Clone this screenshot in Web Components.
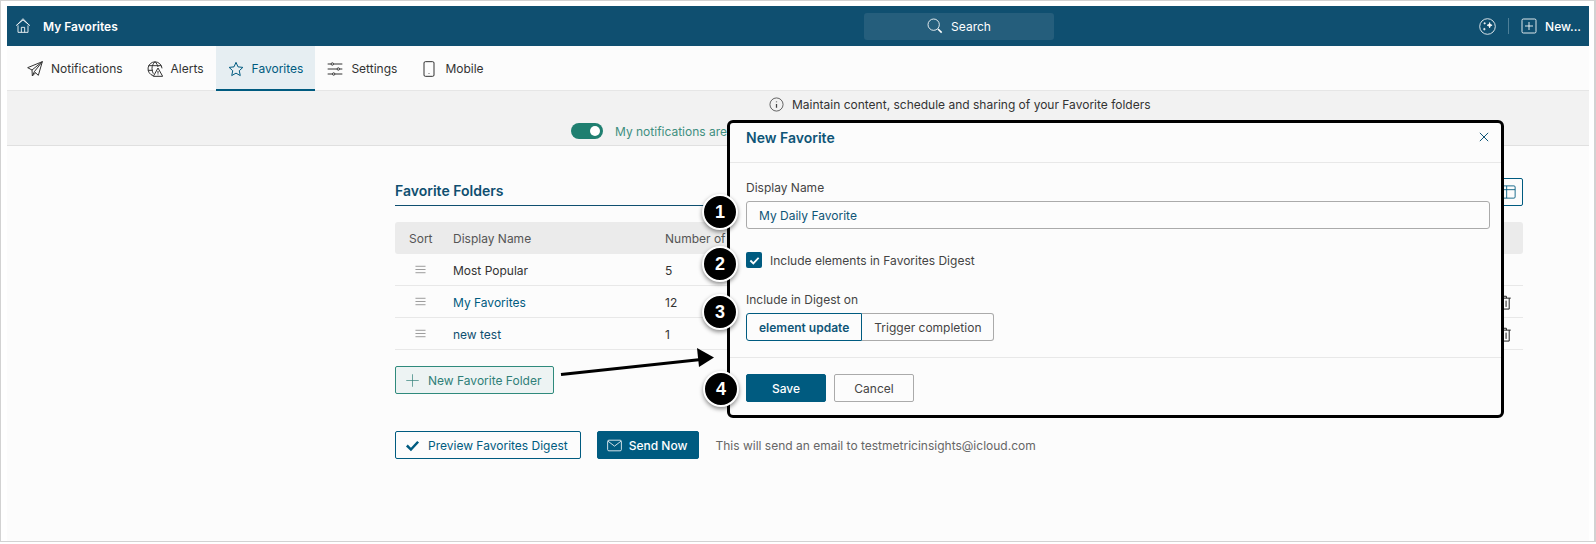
<!DOCTYPE html>
<html lang="en">
<head>
<meta charset="utf-8">
<title>My Favorites</title>
<style>
  html, body { margin: 0; height: 544px; overflow: hidden; background: #fff; }
  body { font: 12px Inter, "Liberation Sans", sans-serif; color: #333; position: relative; }
</style>
</head>
<body>
<app-frame>
  <top-bar title="My Favorites"></top-bar>
  <tab-bar>
    <nav-tab icon="plane" label="Notifications"></nav-tab>
    <nav-tab icon="globe" label="Alerts"></nav-tab>
    <nav-tab icon="star" label="Favorites" active></nav-tab>
    <nav-tab icon="sliders" label="Settings"></nav-tab>
    <nav-tab icon="phone" label="Mobile"></nav-tab>
  </tab-bar>
  <info-band></info-band>
  <folders-panel></folders-panel>
</app-frame>

<pointer-arrow></pointer-arrow>
<new-favorite-modal></new-favorite-modal>
<step-badge n="1" style="--x:720px;--y:212px"></step-badge>
<step-badge n="2" style="--x:720px;--y:264px"></step-badge>
<step-badge n="3" style="--x:720px;--y:312px"></step-badge>
<step-badge n="4" style="--x:721px;--y:389px"></step-badge>

<script>
const ICONS = {
  home: '<path d="M1.5 11.5 12 3l10.5 8.5M4 9.5 12 1l8 8.5"/><path d="M4.5 11v10.5h15V11"/><path d="M9.5 21.5V14h5v7.5"/>',
  plane: '<path d="M23 1 1 10l6.500 3.500L23 1 11 16l6 5.500z"/><path d="M7.500 13.500 8 22.500l3-6.500"/><path d="m8 22.500 4.500-4.500"/>',
  globe: '<path d="M9.500 22A10.500 10.500 0 1 1 22.500 11"/><path d="M12 1C9 4 7.500 7.500 7.500 11c0 3 .6 5.500 2 8M12 1c2.500 2.500 4 5.500 4.500 8"/><path d="M2.300 7h19M1.500 14h7"/><path d="M16.500 10.500 9.500 23h14z"/><path d="M16.500 15v4M16.500 20.300v1"/>',
  star: '<path d="m12 2 3 6.800 7.300.8-5.400 5 1.500 7.300L12 18.200l-6.400 3.700 1.500-7.300-5.400-5 7.300-.8z"/>',
  sliders: '<path d="M1 4.500h5M10 4.500h13M1 12h14M19 12h4M1 19.500h7M12 19.500h11"/><circle cx="8" cy="4.500" r="1.800"/><circle cx="17" cy="12" r="1.800"/><circle cx="10" cy="19.500" r="1.800"/>',
  phone: '<rect x="4.500" y="1" width="15" height="22" rx="2"/><path d="M12 18.500v.8" stroke-width="2.200"/>',
  search: '<circle cx="10" cy="10" r="8.500"/><path d="m16.500 16.500 5.500 5.500" stroke-width="2.400"/>',
  info: '<circle cx="12" cy="12" r="10.500"/><path d="M12 11v6M12 7v1.500" stroke-width="2"/>',
  sparkle: '<circle cx="12" cy="12" r="11"/><path d="M15 6.500c.4 2.500 1.200 3.300 3.500 3.700-2.300.4-3.100 1.200-3.500 3.700-.4-2.500-1.200-3.300-3.500-3.700 2.300-.4 3.100-1.200 3.500-3.700z" fill="currentColor"/><path d="M8 6v3M6.500 7.500h3M7.500 14v3.500M5.800 15.700h3.400"/>',
  plusbox: '<rect x="1.500" y="1.500" width="21" height="21" rx="2"/><path d="M12 6v12M6 12h12"/>',
  plus: '<path d="M12 2v20M2 12h20"/>',
  check: '<path d="m3 12 6.500 6.500L21 6" stroke-width="4"/>',
  mail: '<rect x="1" y="3.500" width="22" height="17" rx="2"/><path d="m1.500 5 10.500 8L22.500 5"/>',
  grid: '<rect x="1.500" y="1.500" width="21" height="21" rx="2"/><path d="M1.500 8h21M8 1.500v21"/>',
  trash: '<path d="M2 5h20M9 5V2h6v3M4.500 5v17.500h15V5M9.500 9v10M14.500 9v10"/>',
  handle: '<path d="M1 5h22M1 12h22M1 19h22"/>',
  close: '<path d="m2 2 20 20M22 2 2 22"/>'
};

function icon(name, size, width = 1.5) {
  return `<svg width="${size}" height="${size}" viewBox="0 0 24 24" fill="none" stroke="currentColor" stroke-width="${width}" aria-hidden="true">${ICONS[name]}</svg>`;
}

class AppFrame extends HTMLElement {
  constructor() {
    super();
    this.attachShadow({ mode: 'open' }).innerHTML = `
      <style>
        :host {
          display: block;
          box-sizing: border-box;
          height: 542px;
          padding: 5px 5px 0 6px;
          border: solid #d2d2d2;
          border-width: 1px 2px 1px 1px;
          background: #fff;
        }
        .app { height: 100%; background: #fcfcfc; display: flex; flex-direction: column; }
      </style>
      <div class="app"><slot></slot></div>`;
  }
}

class TopBar extends HTMLElement {
  constructor() {
    super();
    this.attachShadow({ mode: 'open' }).innerHTML = `
      <style>
        :host {
          display: grid;
          grid-template-columns: 857px 190px 1fr;
          align-items: center;
          height: 40px;
          background: #0f4f70;
          color: #fff;
        }
        .left, .right { display: flex; align-items: center; }
        .left { padding-left: 8px; gap: 12px; }
        .left b { font-weight: 600; }
        .right { justify-content: flex-end; padding-right: 8px; }
        .right svg { display: block; }
        .sep { width: 1px; height: 16px; background: #4d7f98; margin: 0 12px; }
        .new { font-weight: 500; margin-left: 8px; }
        .search {
          display: flex;
          align-items: center;
          justify-content: center;
          gap: 8px;
          height: 27px;
          border-radius: 3px;
          background: #255e7c;
        }
      </style>
      <div class="left">${icon('home', 16, 1.3)}<b>${this.getAttribute('title')}</b></div>
      <div class="search">${icon('search', 16, 1.3)}<span>Search</span></div>
      <div class="right">${icon('sparkle', 17, 1.2)}<span class="sep"></span>${icon('plusbox', 16, 1.3)}<span class="new">New...</span></div>`;
  }
}

class TabBar extends HTMLElement {
  constructor() {
    super();
    this.attachShadow({ mode: 'open' }).innerHTML = `
      <style>
        :host {
          display: flex;
          height: 45px;
          box-sizing: border-box;
          padding-left: 8px;
          border-bottom: 1px solid #e6e6e6;
        }
      </style>
      <slot></slot>`;
  }
}

class NavTab extends HTMLElement {
  constructor() {
    super();
    this.attachShadow({ mode: 'open' }).innerHTML = `
      <style>
        :host {
          display: flex;
          align-items: center;
          gap: 8px;
          padding: 0 12px;
          height: 45px;
          box-sizing: border-box;
          color: #333;
        }
        :host([active]) {
          background: #e6eef2;
          color: #005b80;
          box-shadow: inset 0 -2px 0 #005b80;
        }
        svg { display: block; }
      </style>
      ${icon(this.getAttribute('icon'), 16, 1.5)}<span>${this.getAttribute('label')}</span>`;
  }
}

class InfoBand extends HTMLElement {
  constructor() {
    super();
    this.attachShadow({ mode: 'open' }).innerHTML = `
      <style>
        :host {
          display: block;
          height: 55px;
          box-sizing: border-box;
          background: #f2f2f2;
          border-bottom: 1px solid #e0e0e0;
        }
        .row { display: flex; align-items: center; gap: 8px; height: 26px; padding-left: 762px; }
        .row svg { color: #444; }
        .toggle-row { display: flex; align-items: center; gap: 12px; margin-top: 1px; padding-left: 564px; height: 26px; color: #3f8f80; }
        .toggle { width: 32px; height: 16px; border-radius: 8px; background: #1f7f70; position: relative; }
        .toggle::after {
          content: "";
          position: absolute;
          right: 3px;
          top: 3px;
          width: 10px;
          height: 10px;
          border-radius: 50%;
          background: #fff;
        }
      </style>
      <div class="row">${icon('info', 15, 1.3)}<span>Maintain content, schedule and sharing of your Favorite folders</span></div>
      <div class="toggle-row"><span class="toggle"></span><span>My notifications are</span></div>`;
  }
}

class ActionButton extends HTMLElement {
  constructor() {
    super();
    const name = this.getAttribute('icon');
    this.attachShadow({ mode: 'open' }).innerHTML = `
      <style>
        :host {
          display: inline-flex;
          align-items: center;
          gap: 8px;
          box-sizing: border-box;
          height: 28px;
          padding: 0 12px 0 9px;
          border: 1px solid #005b80;
          border-radius: 2px;
          color: #005b80;
          white-space: nowrap;
        }
        :host([kind="teal"]) { border-color: #2f8a7c; background: #edf3f3; color: #2f7f78; }
        :host([kind="solid"]) { background: #005b80; color: #fff; font-weight: 500; gap: 7px; padding-right: 11px; }
        :host([kind="plain"]) { border-color: #aaa; color: #444; }
        :host([wide]) { width: 80px; justify-content: center; padding: 0; }
        svg { display: block; }
      </style>
      ${name ? icon(name, 15, this.getAttribute('kind') === 'teal' ? 1.1 : 1.3) : ''}<slot></slot>`;
  }
}

class FoldersPanel extends HTMLElement {
  constructor() {
    super();
    const rows = [
      ['Most Popular', '5', '#333', false],
      ['My Favorites', '12', '#005b80', true],
      ['new test', '1', '#0f4f70', true]
    ];
    const rowHtml = rows.map(([name, count, colour, trash]) => `
      <div class="row">
        <span class="handle">${icon('handle', 11, 1.8)}</span>
        <span style="color:${colour}">${name}</span>
        <span>${count}</span>
        <span class="trash">${trash ? icon('trash', 15, 1.6) : ''}</span>
      </div>`).join('');
    this.attachShadow({ mode: 'open' }).innerHTML = `
      <style>
        :host {
          display: block;
          width: 1128px;
          margin-left: 388px;
          padding-top: 32px;
        }
        .head { display: flex; justify-content: space-between; align-items: flex-start; height: 44px; }
        h2 {
          flex: 1;
          margin: 0;
          height: 27px;
          line-height: 25px;
          font-size: 14px;
          font-weight: 600;
          color: #0f4f70;
          border-bottom: 1px solid #0f4f70;
          margin-right: 28px;
        }
        .grid-btn {
          box-sizing: border-box;
          width: 28px;
          height: 28px;
          display: flex;
          align-items: center;
          justify-content: center;
          border: 1px solid #005b80;
          border-radius: 2px;
          color: #005b80;
        }
        .row, .header {
          display: grid;
          grid-template-columns: 58px 212px 1fr 26px;
          align-items: center;
        }
        .header { height: 32px; background: #ebebeb; border-radius: 3px; color: #555; }
        .header span:first-child { padding-left: 14px; }
        .row { height: 32px; box-sizing: border-box; padding-top: 1px; border-bottom: 1px solid #e8e8e8; }
        .handle { padding-left: 20px; color: #888; height: 11px; margin-top: -2px; }
        .handle svg, .trash svg { display: block; }
        .trash { color: #222; }
        .actions { display: flex; margin-top: 16px; }
        .send { display: flex; align-items: center; gap: 16px; margin-top: 37px; }
        .note { color: #666; }
      </style>
      <div class="head"><h2>Favorite Folders</h2><div class="grid-btn">${icon('grid', 14, 1.5)}</div></div>
      <div class="header"><span>Sort</span><span>Display Name</span><span>Number of</span><span></span></div>
      ${rowHtml}
      <div class="actions"><action-button kind="teal" icon="plus">New Favorite Folder</action-button></div>
      <div class="send">
        <action-button icon="check">Preview Favorites Digest</action-button>
        <action-button kind="solid" icon="mail">Send Now</action-button>
        <span class="note">This will send an email to testmetricinsights@icloud.com</span>
      </div>`;
  }
}

class NewFavoriteModal extends HTMLElement {
  constructor() {
    super();
    this.attachShadow({ mode: 'open' }).innerHTML = `
      <style>
        :host {
          position: absolute;
          left: 727px;
          top: 120px;
          width: 777px;
          height: 298px;
          box-sizing: border-box;
          border: 3px solid #000;
          border-radius: 6px;
          background: #fcfcfc;
          display: flex;
          flex-direction: column;
          color: #444;
        }
        header {
          display: flex;
          align-items: center;
          justify-content: space-between;
          box-sizing: border-box;
          height: 40px;
          padding: 0 12px 11px 16px;
          border-bottom: 1px solid #e8e8e8;
          flex: none;
        }
        h3 { margin: 0; font-size: 14px; font-weight: 600; color: #0f5577; }
        header span { color: #0f5577; display: flex; }
        .body { flex: 1; padding: 17px 11px 0 16px; }
        label { display: block; line-height: 16px; }
        .input {
          box-sizing: border-box;
          height: 28px;
          margin-top: 5px;
          padding-left: 12px;
          display: flex;
          align-items: center;
          border: 1px solid #aaa;
          border-radius: 3px;
          color: #0f5577;
        }
        .check { display: flex; align-items: center; gap: 8px; margin-top: 22px; height: 18px; }
        .box {
          width: 16px;
          height: 16px;
          border-radius: 2px;
          background: #005b80;
          color: #fff;
          display: flex;
          align-items: center;
          justify-content: center;
        }
        .digest { margin-top: 23px; }
        .segments { display: flex; width: fit-content; margin-top: 5px; height: 28px; }
        .segments span {
          display: flex;
          align-items: center;
          padding: 0 12px;
          box-sizing: border-box;
          border: 1px solid #aaa;
          border-left: 0;
          border-radius: 0 3px 3px 0;
        }
        .segments .on {
          border: 1px solid #005b80;
          border-radius: 3px 0 0 3px;
          color: #0f5577;
          font-weight: 600;
        }
        footer {
          flex: none;
          display: flex;
          align-items: flex-start;
          gap: 8px;
          box-sizing: border-box;
          height: 58px;
          padding: 16px 0 0 16px;
          border-top: 1px solid #e8e8e8;
        }
      </style>
      <header><h3>New Favorite</h3><span>${icon('close', 10, 2.4)}</span></header>
      <div class="body">
        <label>Display Name</label>
        <div class="input">My Daily Favorite</div>
        <div class="check"><span class="box">${icon('check', 11, 1)}</span><span>Include elements in Favorites Digest</span></div>
        <label class="digest">Include in Digest on</label>
        <div class="segments"><span class="on">element update</span><span>Trigger completion</span></div>
      </div>
      <footer>
        <action-button kind="solid" wide>Save</action-button>
        <action-button kind="plain" wide>Cancel</action-button>
      </footer>`;
  }
}

class StepBadge extends HTMLElement {
  constructor() {
    super();
    this.attachShadow({ mode: 'open' }).innerHTML = `
      <style>
        :host {
          position: absolute;
          left: calc(var(--x) - 18px);
          top: calc(var(--y) - 18px);
          width: 36px;
          height: 36px;
          box-sizing: border-box;
          display: flex;
          align-items: center;
          justify-content: center;
          border: 2px solid #fff;
          border-radius: 50%;
          background: #000;
          color: #fff;
          font: 700 18px "Liberation Sans", sans-serif;
          box-shadow: 0 2px 4px rgba(0, 0, 0, .45);
        }
      </style>
      ${this.getAttribute('n')}`;
  }
}

class PointerArrow extends HTMLElement {
  constructor() {
    super();
    this.attachShadow({ mode: 'open' }).innerHTML = `
      <style>
        :host { position: absolute; left: 555px; top: 340px; width: 165px; height: 40px; }
        svg { display: block; }
      </style>
      <svg width="165" height="40" viewBox="0 0 165 40">
        <path d="M6 34.500 146 19.500" stroke="#000" stroke-width="3" fill="none"/>
        <path d="M159 17.500 142 8l2 19z" fill="#000"/>
      </svg>`;
  }
}

customElements.define('app-frame', AppFrame);
customElements.define('top-bar', TopBar);
customElements.define('tab-bar', TabBar);
customElements.define('nav-tab', NavTab);
customElements.define('info-band', InfoBand);
customElements.define('action-button', ActionButton);
customElements.define('folders-panel', FoldersPanel);
customElements.define('new-favorite-modal', NewFavoriteModal);
customElements.define('step-badge', StepBadge);
customElements.define('pointer-arrow', PointerArrow);
</script>
</body>
</html>
